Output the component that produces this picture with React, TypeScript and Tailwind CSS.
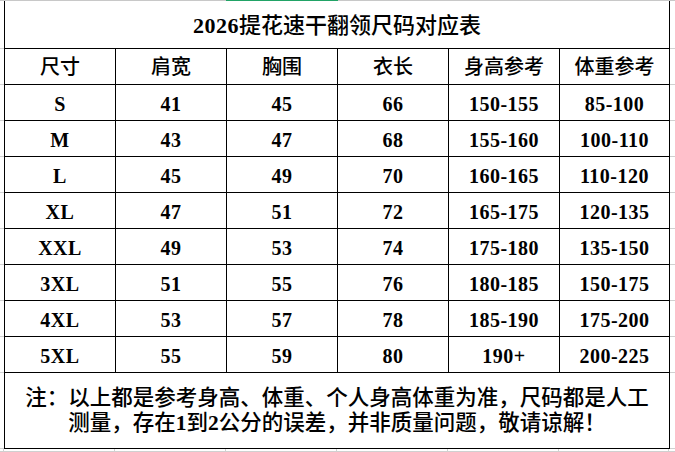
const columns = ["尺寸", "肩宽", "胸围", "衣长", "身高参考", "体重参考"];

const rows = [
  ["S", "41", "45", "66", "150-155", "85-100"],
  ["M", "43", "47", "68", "155-160", "100-110"],
  ["L", "45", "49", "70", "160-165", "110-120"],
  ["XL", "47", "51", "72", "165-175", "120-135"],
  ["XXL", "49", "53", "74", "175-180", "135-150"],
  ["3XL", "51", "55", "76", "180-185", "150-175"],
  ["4XL", "53", "57", "78", "185-190", "175-200"],
  ["5XL", "55", "59", "80", "190+", "200-225"],
];

const cellWidths = ["w-[111px]", "w-[111px]", "w-[111px]", "w-[111px]", "w-[111px]", "w-[110px]"];

// gray spreadsheet gridlines peeking out on both sides of the table
const Gutter = ({ width }: { width: string }) => (
  <div className={`flex flex-col ${width}`}>
    <div className="h-[48px] border-b border-[#d0d0d0]" />
    {[...Array(9)].map((_, i) => (
      <div key={i} className="h-[36px] border-b border-[#d0d0d0]" />
    ))}
    <div className="h-[76px] border-b border-[#d0d0d0]" />
  </div>
);

const App = () => {
  return (
    <div className="w-[675px] h-[452px] overflow-hidden bg-white text-black font-['Liberation_Serif','Noto_Sans_CJK_SC',serif]">
      <div className="flex h-px">
        <div className="w-[226px] bg-[#c8c8c8]" />
        <div className="w-[112px] bg-[#21a366]" />
        <div className="flex-1 bg-[#c8c8c8]" />
      </div>

      <div className="flex">
        <Gutter width="w-[4px]" />

        <div className="w-[666px] border-l border-black">
          <div className="flex h-[48px] items-center justify-center border-b border-r border-black pt-[2px] text-[22px] font-medium">
            <span className="font-bold tracking-[0.5px]">2026</span>提花速干翻领尺码对应表
          </div>

          <div className="flex h-[36px]">
            {columns.map((c, i) => (
              <div
                key={c}
                className={`${cellWidths[i]} flex items-center justify-center border-b border-r border-black text-[20px] font-medium`}
              >
                {c}
              </div>
            ))}
          </div>

          {rows.map((r) => (
            <div key={r[0]} className="flex h-[36px]">
              {r.map((v, i) => (
                <div
                  key={i}
                  className={`${cellWidths[i]} flex items-center justify-center border-b border-r border-black pt-[2px] text-[20px] font-bold tracking-[0.5px]`}
                >
                  {v}
                </div>
              ))}
            </div>
          ))}

          <div className="flex h-[76px] flex-col items-center justify-center border-b border-r border-black text-[21.5px] leading-[25px] font-medium">
            <span>注：以上都是参考身高、体重、个人身高体重为准，尺码都是人工</span>
            <span>
              测量，存在<b>1</b>到<b>2</b>公分的误差，并非质量问题，敬请谅解！
            </span>
          </div>
        </div>

        <div className="flex-1">
          <Gutter width="w-full" />
        </div>
      </div>

      <div className="flex h-[3px] border-b border-[#d0d0d0]">
        <div className="w-[4px] border-r border-[#d0d0d0]" />
        <div className="w-[111px] border-r border-[#d0d0d0]" />
        <div className="w-[111px] border-r border-[#d0d0d0]" />
        <div className="w-[111px] border-r border-[#d0d0d0]" />
        <div className="w-[111px] border-r border-[#d0d0d0]" />
        <div className="w-[111px] border-r border-[#d0d0d0]" />
        <div className="w-[110px] border-r border-[#d0d0d0]" />
      </div>
    </div>
  );
};

export default App;
